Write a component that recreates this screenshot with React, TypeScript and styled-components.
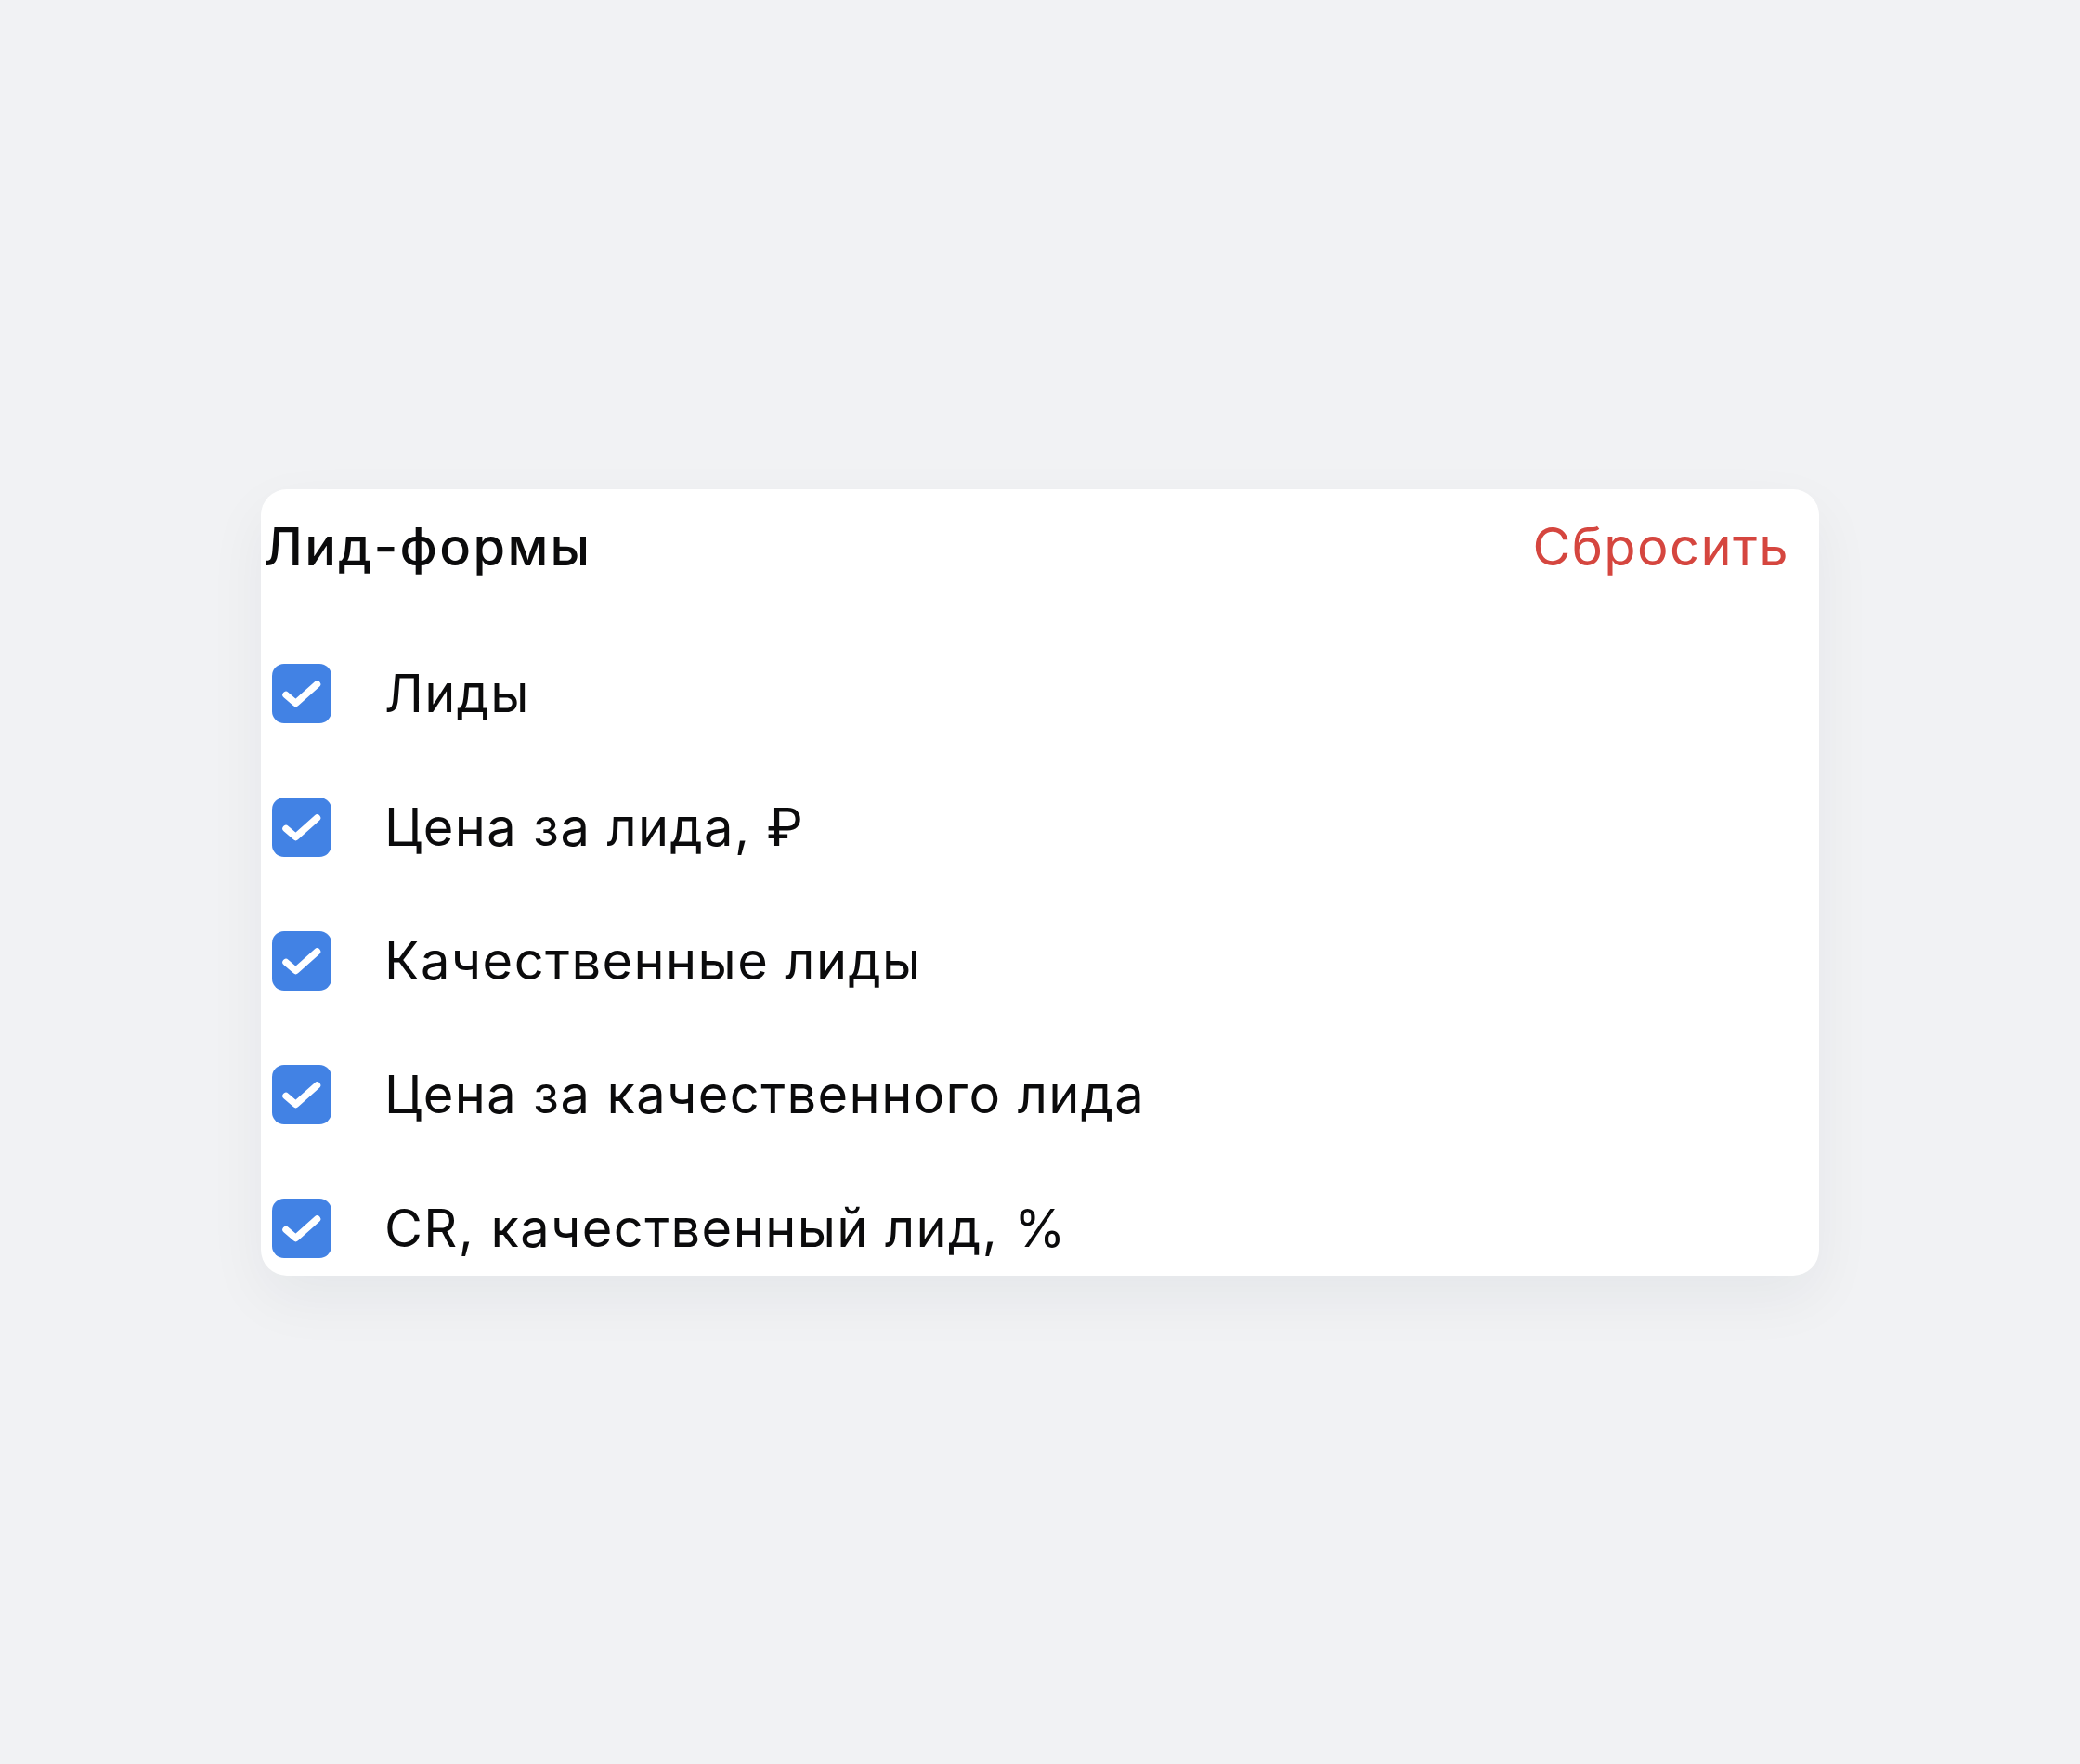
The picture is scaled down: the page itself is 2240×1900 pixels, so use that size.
import React, { useState } from 'react';
import styled, { createGlobalStyle } from 'styled-components';

const GlobalStyle = createGlobalStyle`
  html, body {
    margin: 0;
    padding: 0;
    background: #f1f2f4;
  }

  body {
    font-family: Inter, 'Noto Sans', Roboto, sans-serif;
    -webkit-font-smoothing: antialiased;
  }
`;

const metrics = [
  { id: 'leads', label: 'Лиды' },
  { id: 'cpl', label: 'Цена за лида, ₽' },
  { id: 'qualified', label: 'Качественные лиды' },
  { id: 'cpql', label: 'Цена за качественного лида' },
  { id: 'cr', label: 'CR, качественный лид, %' },
];

const initialChecked = metrics.reduce<Record<string, boolean>>((acc, m) => {
  acc[m.id] = true;
  return acc;
}, {});

const CheckIcon = () => (
  <svg width="64" height="64" viewBox="0 0 64 64" fill="none">
    <path
      d="M15 33.5L25.5 42.5L48.5 22"
      stroke="#fff"
      strokeWidth="7.5"
      strokeLinecap="round"
      strokeLinejoin="round"
    />
  </svg>
);

const App = () => {
  const [checked, setChecked] = useState(initialChecked);

  const toggle = (id: string) =>
    setChecked((prev) => ({ ...prev, [id]: !prev[id] }));

  const reset = () => setChecked(initialChecked);

  return (
    <Page>
      <GlobalStyle />
      <Card>
        <Header>
          <Title>Лид-формы</Title>
          <ResetButton onClick={reset}>Сбросить</ResetButton>
        </Header>
        <List>
          {metrics.map((m) => (
            <Row key={m.id} onClick={() => toggle(m.id)}>
              <Box $checked={checked[m.id]}>
                {checked[m.id] && <CheckIcon />}
              </Box>
              <Label>{m.label}</Label>
            </Row>
          ))}
        </List>
      </Card>
    </Page>
  );
};

export default App;

const Page = styled.div`
  min-height: 100vh;
  display: flex;
  align-items: center;
  justify-content: center;
`;

const Card = styled.div`
  width: 1678px;
  height: 847px;
  box-sizing: border-box;
  background: #fff;
  border-radius: 28px;
  box-shadow: 0 24px 64px rgba(20, 30, 50, 0.055);
  display: flex;
  flex-direction: column;
  overflow: hidden;
`;

const Header = styled.div`
  display: flex;
  align-items: center;
  justify-content: space-between;
  padding: 28px 32px 0 3px;
`;

const Title = styled.h2`
  margin: 0;
  font-size: 56px;
  line-height: 68px;
  font-weight: 500;
  letter-spacing: 2.3px;
  color: #0b0b0c;
`;

const ResetButton = styled.button`
  border: none;
  background: none;
  padding: 0;
  cursor: pointer;
  font-family: inherit;
  font-size: 56px;
  line-height: 68px;
  font-weight: 400;
  letter-spacing: 1.4px;
  color: #d5463f;
`;

const List = styled.div`
  display: flex;
  flex-direction: column;
  gap: 80px;
  margin-top: 92px;
  padding-left: 12px;
`;

const Row = styled.label`
  display: flex;
  align-items: center;
  gap: 57px;
  height: 64px;
  cursor: pointer;
`;

const Box = styled.span<{ $checked: boolean }>`
  flex: none;
  width: 64px;
  height: 64px;
  border-radius: 13px;
  display: flex;
  align-items: center;
  justify-content: center;
  background: ${(p) => (p.$checked ? '#4282e4' : '#fff')};
  box-shadow: ${(p) => (p.$checked ? 'none' : 'inset 0 0 0 3px #c4c8cf')};
`;

const Label = styled.span`
  font-size: 56px;
  line-height: 68px;
  font-weight: 400;
  letter-spacing: 1.4px;
  color: #0b0b0c;
`;
